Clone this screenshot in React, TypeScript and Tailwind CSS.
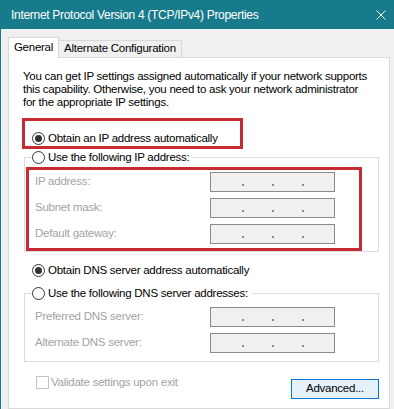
import React from 'react';

const FONT = { fontFamily: '"Liberation Sans", Arial, sans-serif' };

const Radio: React.FC<{ checked?: boolean }> = ({ checked }) => (
    <span className="flex h-[13px] w-[13px] shrink-0 items-center justify-center rounded-full border border-[#333333] bg-white">
        {checked && <span className="h-[7px] w-[7px] rounded-full bg-[#333333]" />}
    </span>
);

const IpBox: React.FC = () => (
    <div className="flex h-[20px] w-[125px] items-center gap-[28px] border border-[#8a8a8a] bg-[#f0f0f0] pl-[31px] pt-[5px]">
        <span className="h-[2px] w-[2px] bg-[#8a8a8a]" />
        <span className="h-[2px] w-[2px] bg-[#8a8a8a]" />
        <span className="h-[2px] w-[2px] bg-[#8a8a8a]" />
    </div>
);

const IpRow: React.FC<{ label: string }> = ({ label }) => (
    <div className="flex h-[20px] items-center">
        <span className="w-[175px] text-[#a3a3a3]">{label}</span>
        <IpBox />
    </div>
);

const App: React.FC = () => {
    return (
        <div
            className="flex h-[409px] w-[394px] flex-col overflow-hidden border-l border-[#177b8b] bg-[#f0f0f0] text-[11.5px] tracking-[-0.25px] text-black"
            style={FONT}
        >
            {/* title bar */}
            <div className="flex h-[29px] shrink-0 items-center justify-between bg-[#177b8b] pl-[10px] pr-[4px] text-[12px] tracking-[-0.3px] text-white">
                <span>Internet Protocol Version 4 (TCP/IPv4) Properties</span>
                <svg width="10" height="10" viewBox="0 0 10 10" className="mr-[4px]">
                    <path d="M0.5 0.5 L9.5 9.5 M9.5 0.5 L0.5 9.5" stroke="white" strokeWidth="1" />
                </svg>
            </div>

            <div className="flex flex-1 flex-col pl-[7px] pt-[8px]">
                {/* tabs */}
                <div className="flex items-end">
                    <div className="relative z-10 -mb-px flex h-[21px] w-[51px] items-center justify-center border-x border-t border-[#d9d9d9] bg-white">
                        General
                    </div>
                    <div className="flex h-[17px] w-[123px] items-center border-r border-t border-[#d9d9d9] pl-[5px]">
                        Alternate Configuration
                    </div>
                </div>

                {/* tab panel */}
                <div className="flex w-[382px] flex-1 flex-col border border-[#d9d9d9] bg-white">
                    <p className="ml-[14px] mt-[12px] leading-[13px]">
                        You can get IP settings assigned automatically if your network supports
                        <br />
                        this capability. Otherwise, you need to ask your network administrator
                        <br />
                        for the appropriate IP settings.
                    </p>

                    <div className="ml-[13px] mt-[9px] h-[31px] w-[221px] border-[3px] border-[#c62a32] pl-[7px] pt-[11px]">
                        <label className="flex h-[13px] items-center gap-[3px]">
                            <Radio checked />
                            <span>Obtain an IP address automatically</span>
                        </label>
                    </div>

                    <fieldset className="ml-[15px] mt-[2px] w-[355px] border border-[#dcdcdc]">
                        <legend className="ml-[7px] pr-[4px]">
                            <span className="flex h-[13px] items-center gap-[3px]">
                                <Radio />
                                <span>Use the following IP address:</span>
                            </span>
                        </legend>
                        <div className="ml-[1px] mt-[3px] flex h-[84px] w-[336px] flex-col gap-[6px] border-[3px] border-[#c62a32] pl-[6px] pt-[2px]">
                            <IpRow label="IP address:" />
                            <IpRow label="Subnet mask:" />
                            <IpRow label="Default gateway:" />
                        </div>
                    </fieldset>

                    <label className="ml-[23px] mt-[12px] flex h-[13px] items-center gap-[3px]">
                        <Radio checked />
                        <span>Obtain DNS server address automatically</span>
                    </label>

                    <fieldset className="ml-[15px] mt-[10px] w-[355px] border border-[#dcdcdc] pb-[8px]">
                        <legend className="ml-[7px] pr-[4px]">
                            <span className="flex h-[13px] items-center gap-[3px]">
                                <Radio />
                                <span>Use the following DNS server addresses:</span>
                            </span>
                        </legend>
                        <div className="mt-[7px] flex flex-col gap-[6px] pl-[10px]">
                            <IpRow label="Preferred DNS server:" />
                            <IpRow label="Alternate DNS server:" />
                        </div>
                    </fieldset>

                    <div className="ml-[15px] mt-[14px] flex w-[355px] items-start justify-between">
                        <label className="ml-[12px] flex h-[13px] items-center gap-[2px] text-[#a3a3a3]">
                            <span className="h-[13px] w-[13px] border border-[#c4c4c4] bg-white" />
                            <span>Validate settings upon exit</span>
                        </label>
                        <button className="mt-[3px] flex h-[20px] w-[88px] items-center justify-center border border-[#0078d7] bg-[#e5f1fb]">
                            Advanced...
                        </button>
                    </div>
                </div>
            </div>
        </div>
    );
};

export default App;
